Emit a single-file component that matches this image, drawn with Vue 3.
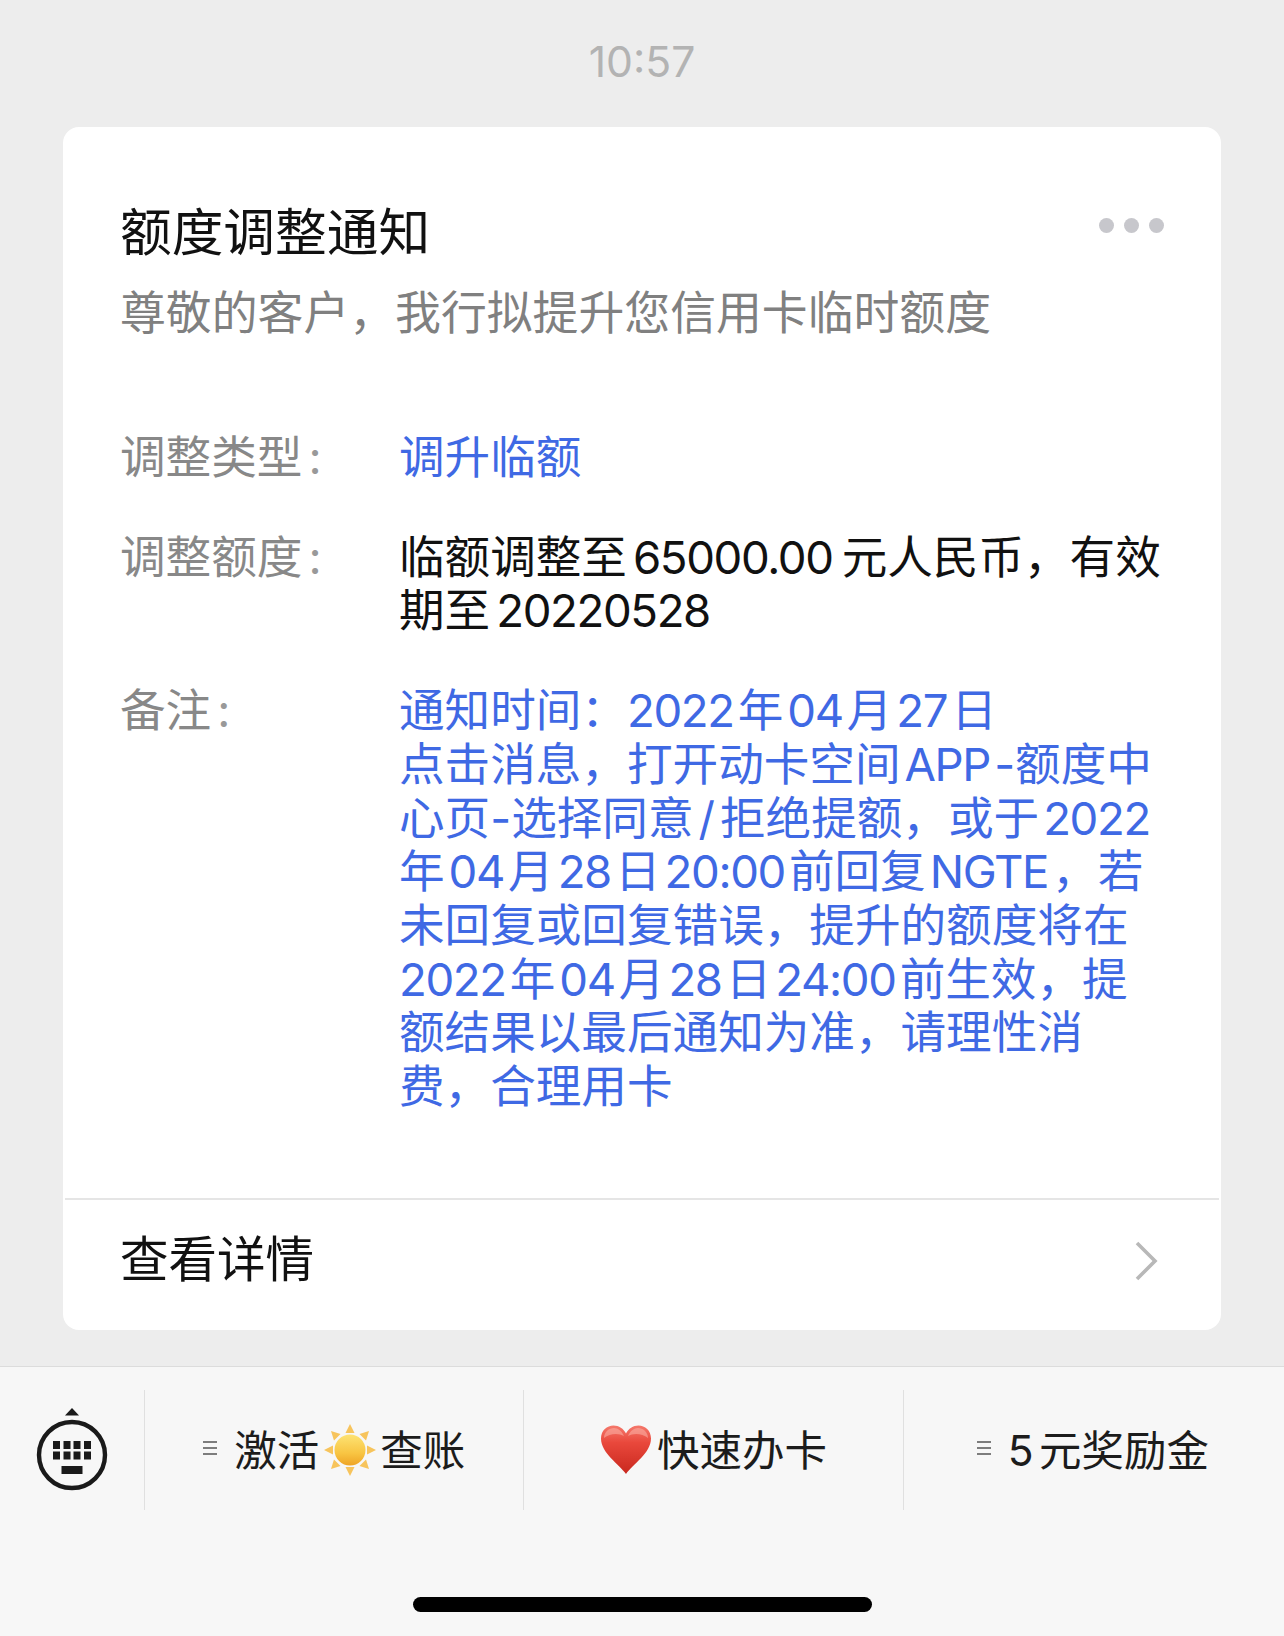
<template>
  <div class="page">
    <div class="time">10:57</div>

    <div class="card">
      <div class="head">
        <div class="title">额度调整通知</div>
        <div class="dots"><i></i><i></i><i></i></div>
      </div>
      <div class="subtitle">尊敬的客户，我行拟提升您信用卡临时额度</div>

      <div class="fields">
        <div class="field" v-for="field in fields" :key="field.label">
          <div class="label">{{ field.label }}<span class="colon">:</span></div>
          <div :class="['value', field.blue ? 'blue' : '']">
            <div v-for="line in field.lines" :key="line">
              <span v-for="(part, i) in split(line)" :key="i" :class="part.type">{{ part.text }}</span>
            </div>
          </div>
        </div>
      </div>

      <div class="more">
        <span>查看详情</span>
        <svg class="chevron" width="24" height="40" viewBox="0 0 24 40">
          <path d="M3 2 L21 20 L3 38" fill="none" stroke="#b8b8b8" stroke-width="3.6" />
        </svg>
      </div>
    </div>

    <div class="bar">
      <div class="menu">
        <div class="keyboard">
          <svg width="72" height="86" viewBox="0 0 72 86">
            <path d="M29 7.5 L36 0 L43 7.5 Z" fill="#1a1a1a" />
            <circle cx="36" cy="47" r="33" fill="none" stroke="#1a1a1a" stroke-width="4.4" />
            <g fill="#1a1a1a">
              <rect x="17" y="33" width="7" height="8" /><rect x="27.5" y="33" width="7" height="8" />
              <rect x="37.5" y="33" width="7" height="8" /><rect x="48" y="33" width="7" height="8" />
              <rect x="17" y="43.5" width="7" height="8" /><rect x="27.5" y="43.5" width="7" height="8" />
              <rect x="37.5" y="43.5" width="7" height="8" /><rect x="48" y="43.5" width="7" height="8" />
              <rect x="25.5" y="58" width="21" height="8" />
            </g>
          </svg>
        </div>

        <div class="cell">
          <span class="lines"><i></i><i></i><i></i></span>
          <span>激活</span>
          <svg class="emoji sun" width="54" height="54" viewBox="0 0 54 54">
            <defs>
              <linearGradient id="sunFill" x1="0" y1="0" x2="0" y2="1">
                <stop offset="0" stop-color="#fde374" />
                <stop offset="0.6" stop-color="#f8c543" />
                <stop offset="1" stop-color="#eea425" />
              </linearGradient>
            </defs>
            <g fill="#f7c45c">
              <path d="M27 1 L31.5 10 L22.5 10 Z" /><path d="M27 53 L31.5 44 L22.5 44 Z" />
              <path d="M1 27 L10 22.5 L10 31.5 Z" /><path d="M53 27 L44 22.5 L44 31.5 Z" />
              <path d="M8 8 L17.5 11 L11 17.5 Z" /><path d="M46 8 L36.5 11 L43 17.5 Z" />
              <path d="M8 46 L17.5 43 L11 36.5 Z" /><path d="M46 46 L36.5 43 L43 36.5 Z" />
            </g>
            <circle cx="27" cy="27" r="15.5" fill="url(#sunFill)" />
          </svg>
          <span>查账</span>
        </div>

        <div class="cell">
          <svg class="emoji heart" width="52" height="50" viewBox="0 0 52 50">
            <defs>
              <linearGradient id="heartFill" x1="0" y1="0" x2="0" y2="1">
                <stop offset="0" stop-color="#f5796c" />
                <stop offset="0.35" stop-color="#e9483c" />
                <stop offset="1" stop-color="#c9281e" />
              </linearGradient>
            </defs>
            <path d="M26 49 C19 39 1 28 1 13.5 C1 5.5 7 0.5 13.5 0.5 C19 0.5 23.5 3.5 26 8.5 C28.5 3.5 33 0.5 38.5 0.5 C45 0.5 51 5.5 51 13.5 C51 28 33 39 26 49 Z" fill="url(#heartFill)" />
            <path d="M4 13 C4 7 9 3 14 3 C18 3 22 6 24 11 C19 8 10 8 4 13 Z" fill="#fbb5aa" opacity="0.55" />
            <path d="M48 13 C48 7 43 3 38 3 C34 3 30 6 28 11 C33 8 42 8 48 13 Z" fill="#fbb5aa" opacity="0.55" />
          </svg>
          <span>快速办卡</span>
        </div>

        <div class="cell last">
          <span class="lines"><i></i><i></i><i></i></span>
          <span class="reward">5元奖励金</span>
        </div>
      </div>
      <div class="home"></div>
    </div>
  </div>
</template>

<script setup>
const fields = [
  { label: '调整类型', lines: ['调升临额'], blue: true },
  { label: '调整额度', lines: ['临额调整至65000.00元人民币，有效', '期至20220528'] },
  {
    label: '备注',
    blue: true,
    lines: [
      '通知时间：2022年04月27日',
      '点击消息，打开动卡空间APP-额度中',
      '心页-选择同意/拒绝提额，或于2022',
      '年04月28日20:00前回复NGTE，若',
      '未回复或回复错误，提升的额度将在',
      '2022年04月28日24:00前生效，提',
      '额结果以最后通知为准，请理性消',
      '费，合理用卡'
    ]
  }
]

const split = (line) => {
  const parts = line.split(/([0-9A-Za-z.:]+|[-/])/).filter(Boolean)
  return parts.map((text, i) => {
    let type = 'cjk'
    if (/^[0-9A-Za-z.:]+$/.test(text)) {
      type = i > 0 && parts[i - 1].endsWith('：') ? 'num flush' : 'num'
    } else if (text === '/') {
      type = 'slash'
    }
    return { text, type }
  })
}
</script>

<style>
html, body {
  margin: 0;
  background: #ededed;
}
</style>

<style scoped>
.page {
  width: 1284px;
  height: 1636px;
  display: flex;
  flex-direction: column;
  overflow: hidden;
  background: #ededed;
  font-family: Inter, "Noto Sans CJK SC", sans-serif;
}

.time {
  height: 127px;
  padding-top: 34px;
  box-sizing: border-box;
  text-align: center;
  font-size: 42.7px;
  line-height: 56px;
  color: #b3b3b3;
}

.card {
  width: 1158px;
  height: 1203px;
  margin: 0 0 0 63px;
  box-sizing: border-box;
  padding: 0 2px;
  background: #fff;
  border-radius: 16px;
  display: flex;
  flex-direction: column;
}

.head {
  display: flex;
  justify-content: space-between;
  align-items: center;
  padding: 73px 55px 0;
}

.title {
  font-size: 51.7px;
  line-height: 64px;
  color: #111;
}

.dots {
  display: flex;
  gap: 10px;
  margin-bottom: 13px;
}

.dots i {
  width: 15px;
  height: 15px;
  border-radius: 50%;
  background: #c7c7cc;
}

.subtitle {
  padding: 22px 55px 0;
  font-size: 45.85px;
  line-height: 54px;
  color: #808080;
}

.fields {
  flex: 1;
  padding: 91px 55px 0;
  display: flex;
  flex-direction: column;
  gap: 46px;
}

.field {
  display: grid;
  grid-template-columns: 279px 1fr;
  font-size: 45.6px;
  line-height: 53.7px;
}

.label {
  color: #888;
}

.colon {
  margin-left: 6px;
  color: #999;
}

.value {
  color: #111;
  white-space: nowrap;
}

.blue {
  color: #3f69e4;
}

.num {
  letter-spacing: -0.03em;
  margin: 0 9px 0 6px;
}

.blue .num {
  margin: 0 4px;
}

.num:first-child,
.blue .num:first-child,
.blue .flush {
  margin-left: 0;
}

.slash {
  margin: 0 5px;
}

.more {
  height: 132px;
  border-top: 2px solid #e5e5e5;
  padding: 0 61px 19px 55px;
  box-sizing: border-box;
  display: flex;
  align-items: center;
  justify-content: space-between;
  font-size: 48.5px;
  color: #111;
}

.chevron {
  margin-top: 11px;
}

.bar {
  margin-top: 36px;
  flex: 1;
  display: flex;
  flex-direction: column;
  background: #f7f7f7;
  border-top: 1px solid #dcdcdc;
}

.menu {
  display: flex;
  margin-top: 23px;
  height: 120px;
}

.keyboard {
  width: 144px;
  display: flex;
  justify-content: center;
  padding-top: 18px;
  box-sizing: border-box;
}

.cell {
  flex: 1;
  border-left: 1px solid #e0e0e0;
  display: flex;
  align-items: center;
  justify-content: center;
  padding-bottom: 5px;
  box-sizing: border-box;
  font-size: 42.5px;
  color: #1c1c1c;
}

.emoji {
  flex: none;
}

.sun {
  margin: 5px 3px 0 4px;
}

.heart {
  margin: 5px 5px 0 0;
}

.lines {
  display: flex;
  flex-direction: column;
  gap: 4px;
  margin-right: 17px;
}

.lines i {
  display: block;
  width: 14px;
  height: 2px;
  background: #7d7d7d;
}

.last {
  padding-right: 2px;
}

.reward {
  text-autospace: normal;
}

.home {
  width: 459px;
  height: 15px;
  margin: 87px 0 0 413px;
  border-radius: 8px;
  background: #000;
}
</style>
